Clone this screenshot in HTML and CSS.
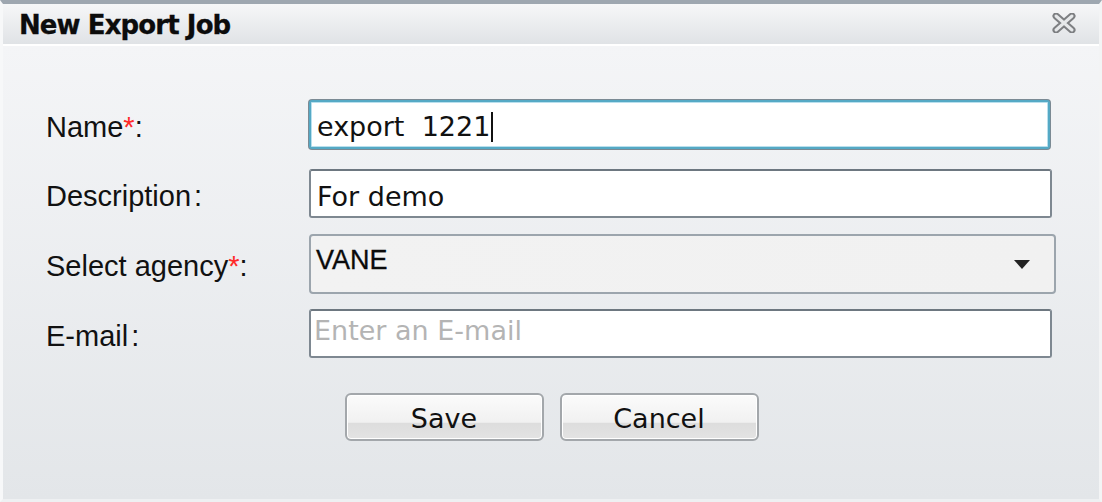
FILE: index.html
```html
<!DOCTYPE html>
<html>
<head>
<meta charset="utf-8">
<link rel="stylesheet" href="styles.css">
</head>
<body>
<div class="dialog">
  <div class="header">
    <span class="title">New Export Job</span>
    <svg class="close" width="26" height="20" viewBox="0 0 26 20">
      <path d="M5 3 L21 17 M21 3 L5 17" stroke="#7d7f82" stroke-width="7" stroke-linecap="round" fill="none"/>
      <path d="M5 3 L21 17 M21 3 L5 17" stroke="#e6e8ea" stroke-width="3" stroke-linecap="round" fill="none"/>
    </svg>
  </div>
  <div class="body">
    <div class="form">
      <div class="row row-name">
        <label class="label">Name<span class="req">*</span>:</label>
        <div class="input focused"><span class="val">export&nbsp; 1221</span><span class="caret"></span></div>
      </div>
      <div class="row row-desc">
        <label class="label">Description<span class="colon">:</span></label>
        <div class="input"><span class="val">For demo</span></div>
      </div>
      <div class="row row-agency">
        <label class="label">Select agency<span class="req">*</span>:</label>
        <div class="select"><span class="sel-val">VANE</span><span class="arrow"></span></div>
      </div>
      <div class="row row-email">
        <label class="label">E-mail<span class="colon">:</span></label>
        <div class="input email"><span class="placeholder">Enter an E-mail</span></div>
      </div>
    </div>
    <div class="buttons">
      <button class="btn">Save</button>
      <button class="btn">Cancel</button>
    </div>
  </div>
</div>
</body>
</html>
```

FILE: styles.css
```css
html, body {
  margin: 0;
  padding: 0;
  width: 1102px;
  height: 502px;
  overflow: hidden;
  background: #e9ebee;
}

.dialog {
  box-sizing: border-box;
  width: 1102px;
  height: 502px;
  border-top: 4px solid #9ea7b0;
  border-left: 3px solid #f7f8f9;
  border-right: 3px solid #f3f4f5;
  border-bottom: 3px solid #eef0f2;
  display: flex;
  flex-direction: column;
}

.header {
  height: 40px;
  flex: none;
  background: linear-gradient(#f6f7f8, #e0e3e6);
  border-bottom: 2px solid #ffffff;
  display: flex;
  align-items: center;
  justify-content: space-between;
  padding: 0 22px 0 16px;
}

.title {
  font-family: "DejaVu Sans", sans-serif;
  font-weight: bold;
  font-size: 26px;
  letter-spacing: -0.9px;
  color: #0c0c0c;
  margin-top: 2px;
  -webkit-text-stroke: 0.3px #0c0c0c;
}

.close {
  display: block;
  margin-top: -2px;
}

.body {
  flex: 1;
  background: linear-gradient(#f4f5f7, #e3e6e9);
  display: flex;
  flex-direction: column;
}

.form {
  padding: 54px 0 0 43px;
  display: flex;
  flex-direction: column;
}

.row {
  display: flex;
  align-items: center;
}

.row-desc { margin-top: 20px; }
.row-agency { margin-top: 16px; }
.row-email { margin-top: 15px; }

.label {
  width: 263px;
  flex: none;
  font-family: "Liberation Sans", Arial, sans-serif;
  font-size: 29px;
  color: #111;
  padding-top: 5px;
}

.req { color: #ff2a2a; }
.colon { margin-left: 3px; }

.input {
  box-sizing: border-box;
  width: 743px;
  height: 49px;
  background: #fff;
  border: 2px solid #7e8891;
  border-top-color: #6d7780;
  border-radius: 3px;
  display: flex;
  align-items: center;
  padding: 6px 0 0 6px;
  font-family: "DejaVu Sans", sans-serif;
  font-size: 27px;
  color: #111;
}

.row-name .input {
  width: 741px;
  border: 2px solid #55a9c5;
  box-shadow: inset 0 0 0 1px #b9e0ee, 0 0 0 1px #7b8a94;
  padding-top: 4px;
}

.input.email {
  padding: 0 0 6px 3px;
}

.caret {
  display: inline-block;
  width: 2px;
  height: 30px;
  background: #111;
  margin-left: 1px;
}

.placeholder {
  color: #b4b4b4;
}

.select {
  box-sizing: border-box;
  width: 747px;
  height: 60px;
  background: linear-gradient(90deg, #f2f2f2, #f1f1f1);
  border: 2px solid #9ca5ad;
  border-radius: 4px;
  display: flex;
  align-items: center;
  justify-content: space-between;
  padding: 0 24px 8px 5px;
}

.sel-val {
  font-family: "Liberation Sans", Arial, sans-serif;
  font-size: 27px;
  color: #0a0a0a;
  -webkit-text-stroke: 0.3px #0a0a0a;
}

.arrow {
  width: 0;
  height: 0;
  border-left: 8px solid transparent;
  border-right: 8px solid transparent;
  border-top: 9px solid #222;
  margin-top: 8px;
}

.buttons {
  display: flex;
  justify-content: center;
  gap: 16px;
  margin-top: 35px;
  padding-left: 1px;
}

.btn {
  box-sizing: border-box;
  width: 199px;
  height: 48px;
  border: 2px solid #a3a7ab;
  border-radius: 6px;
  background: linear-gradient(#fbfbfb 0%, #f1f1f1 62%, #dddddd 64%, #e3e3e3 100%);
  font-family: "DejaVu Sans", sans-serif;
  font-size: 27px;
  color: #111;
  padding: 2px 0 0 0;
  box-shadow: inset 0 0 0 1px #ffffff;
}
```
